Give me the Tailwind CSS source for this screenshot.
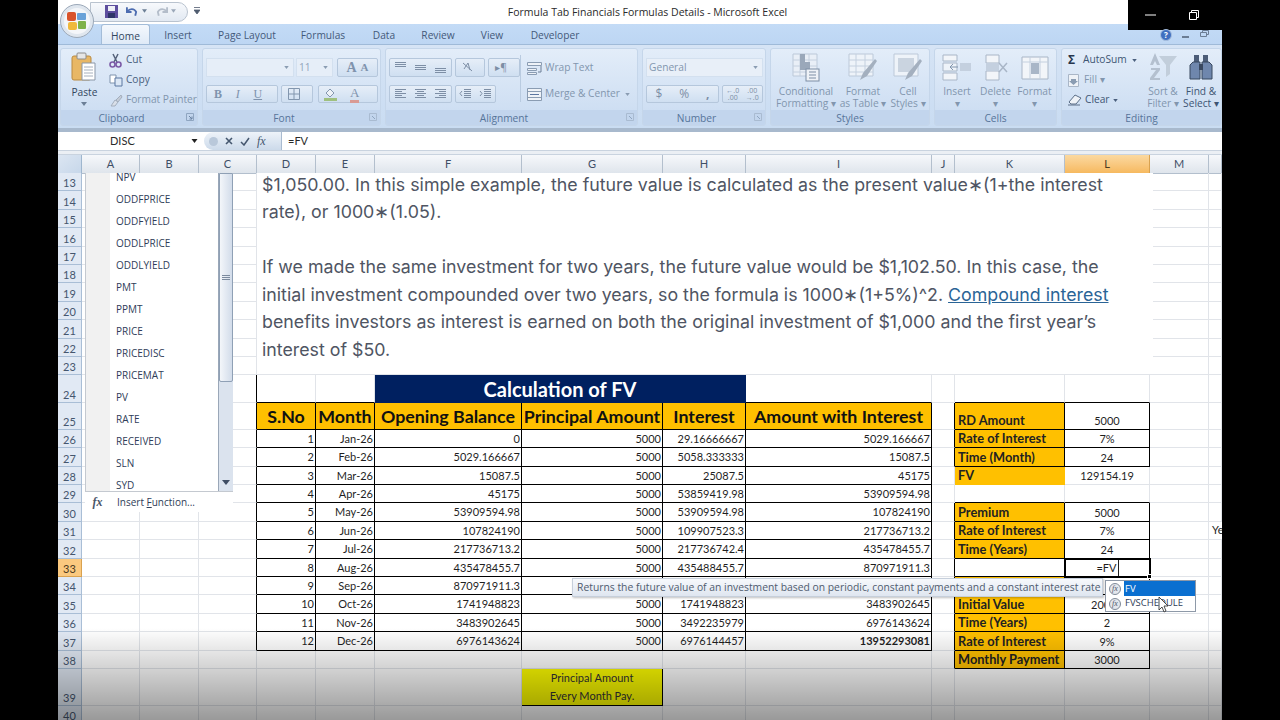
<!DOCTYPE html>
<html lang="en">
<head>
<meta charset="utf-8"/>
<title>Formula Tab Financials Formulas Details - Microsoft Excel</title>
<script src="https://cdn.jsdelivr.net/npm/@tailwindcss/browser@4"></script>
</head>
<body class="bg-black font-['Open_Sans',sans-serif] overflow-hidden">
<div id="app" class="relative w-[1164px] h-[720px] ml-[58px] bg-white overflow-hidden flex flex-col text-[10.2px] text-[#3e5573]">

  <!-- title bar -->
  <div class="h-[24px] shrink-0 flex items-center justify-center pl-[15px] pt-[2px] text-[#2a2a2a] text-[10.5px] bg-white">Formula Tab Financials Formulas Details - Microsoft Excel</div>

  <!-- tabs -->
  <div class="h-[21px] shrink-0 flex items-end bg-gradient-to-b from-[#c3dbf6] to-[#bdd6f3] border-b border-[#9fbad8] pl-[43px] text-[#44597a]">
    <div class="w-[49px] h-[20px] pt-[4px] flex items-center justify-center bg-gradient-to-b from-[#f4f8fd] to-[#dfeaf7] border border-b-0 border-[#a3bcd8] rounded-t-[3px] text-[#33475f]">Home</div>
    <div class="w-[56px] h-[20px] pt-[4px] flex items-center justify-center">Insert</div>
    <div class="w-[82px] h-[20px] pt-[4px] flex items-center justify-center">Page Layout</div>
    <div class="w-[70px] h-[20px] pt-[4px] flex items-center justify-center">Formulas</div>
    <div class="w-[52px] h-[20px] pt-[4px] flex items-center justify-center">Data</div>
    <div class="w-[56px] h-[20px] pt-[4px] flex items-center justify-center">Review</div>
    <div class="w-[52px] h-[20px] pt-[4px] flex items-center justify-center">View</div>
    <div class="w-[74px] h-[20px] pt-[4px] flex items-center justify-center">Developer</div>
  </div>

  <!-- ribbon -->
  <div class="h-[87px] shrink-0 flex gap-[4px] pl-[2px] pt-[3px] bg-gradient-to-b from-[#d6e4f5] to-[#c9dcf2] border-b-[4px] border-[#a8b9cd]">

    <!-- clipboard -->
    <div class="w-[138px] h-[78px] flex flex-col rounded-[3px] border border-[#c5d6ea] bg-gradient-to-b from-[#e3edf9] to-[#c9dbf1] overflow-hidden">
      <div class="h-[61px] flex">
        <div class="w-[46px] flex flex-col items-center pt-[3px] pl-[2px]">
          <svg class="w-[26px] h-[30px]" viewBox="0 0 26 30"><rect x="1" y="4" width="19" height="24" rx="2" fill="#e8b765" stroke="#b98a42"/><rect x="6" y="1" width="9" height="6" rx="1" fill="#e6e6e6" stroke="#8c8c8c"/><path d="M11 11h13v17H11z" fill="#fff" stroke="#8a97a8"/><path d="M13 15h9M13 18h9M13 21h9M13 24h9" stroke="#a6b0bd"/></svg>
          <span class="leading-[13px] mt-[4px] text-[#33475f]">Paste</span>
          <svg class="w-[6px] h-[4px] mt-[3px]" viewBox="0 0 6 4"><path d="M0 0h6L3 4z" fill="#6c7f96"/></svg>
        </div>
        <div class="flex flex-col pt-[1px] pl-[3px] whitespace-nowrap">
          <div class="h-[20px] flex items-center gap-[4px]">
            <svg class="w-[13px] h-[15px]" viewBox="0 0 13 15"><path d="M4 1l4 8M9 1L5 9" stroke="#56627a" stroke-width="1.5"/><circle cx="3.5" cy="11.5" r="2.5" fill="none" stroke="#7b5aa6" stroke-width="1.6"/><circle cx="9.5" cy="11.5" r="2.5" fill="none" stroke="#7b5aa6" stroke-width="1.6"/></svg>
            <span class="text-[#4a5f7d]">Cut</span>
          </div>
          <div class="h-[20px] flex items-center gap-[3px]">
            <svg class="w-[14px] h-[13px]" viewBox="0 0 14 13"><path d="M1 1h6v8H1z" fill="#fff" stroke="#7f93ad"/><path d="M6 4h7v8H6z" fill="#dbe7f5" stroke="#5b76a0"/></svg>
            <span class="text-[#4a5f7d]">Copy</span>
          </div>
          <div class="h-[20px] flex items-center gap-[3px]">
            <svg class="w-[14px] h-[14px]" viewBox="0 0 14 14"><path d="M2 13l4-6 3 2-3 4z" fill="#d9dfe8" stroke="#a3aebd"/><path d="M7 7l5-5 1 2-4 5z" fill="#c4ccd7" stroke="#a3aebd"/></svg>
            <span class="text-[#8296ae]">Format Painter</span>
          </div>
        </div>
      </div>
      <div class="h-[15px] flex items-center justify-center relative bg-[#c2d5ed] text-[#56749a] pt-[2px] pr-[15px]">Clipboard
        <svg class="absolute right-[3px] top-[3px] w-[8px] h-[8px]" viewBox="0 0 8 8"><path d="M.5.5h7v7h-7z" fill="none" stroke="#8fa5c0"/><path d="M3 3l3 3M6 3.500V6H3.500" stroke="#6b83a3" fill="none"/></svg>
      </div>
    </div>

    <!-- font -->
    <div class="w-[179px] h-[78px] flex flex-col rounded-[3px] border border-[#c5d6ea] bg-gradient-to-b from-[#e3edf9] to-[#c9dbf1] overflow-hidden">
      <div class="h-[61px] flex flex-col gap-[8px] pt-[9px] pl-[3px]">
        <div class="h-[19px] flex gap-[2px]">
          <div class="w-[88px] flex items-center justify-end pr-[4px] bg-[#e6eef8] border border-[#d3e0ef]"><svg class="w-[5px] h-[3px]" viewBox="0 0 6 4"><path d="M0 0h6L3 4z" fill="#8a9cb2"/></svg></div>
          <div class="w-[37px] flex items-center justify-between px-[2px] pr-[4px] bg-[#e6eef8] border border-[#d3e0ef] text-[#93a5bb]">11<svg class="w-[5px] h-[3px]" viewBox="0 0 6 4"><path d="M0 0h6L3 4z" fill="#8a9cb2"/></svg></div>
          <div class="w-[41px] ml-[2px] flex items-center justify-center gap-[4px] bg-gradient-to-b from-[#e6eef8] to-[#cfdff1] border border-[#b5c7dc] rounded-[2px] font-['Liberation_Serif',serif] text-[#7f93ad]"><span class="text-[14px] font-bold">A</span><span class="text-[11px] font-bold">A</span></div>
        </div>
        <div class="h-[18px] flex gap-[3px]">
          <div class="w-[72px] flex items-center justify-around pr-[8px] bg-gradient-to-b from-[#e6eef8] to-[#cfdff1] border border-[#b5c7dc] rounded-[2px] font-['Liberation_Serif',serif] text-[12px] text-[#7f93ad]"><b>B</b><i>I</i><u>U</u></div>
          <div class="w-[32px] flex items-center justify-center bg-gradient-to-b from-[#e6eef8] to-[#cfdff1] border border-[#b5c7dc] rounded-[2px] pr-[6px]"><svg class="w-[12px] h-[12px]" viewBox="0 0 12 12"><path d="M.5.5h11v11H.5zM6 .500v11M.5 6h11" fill="none" stroke="#8296ae"/></svg></div>
          <div class="w-[60px] ml-[2px] flex items-center gap-[12px] pl-[4px] bg-gradient-to-b from-[#e6eef8] to-[#cfdff1] border border-[#b5c7dc] rounded-[2px]">
            <svg class="w-[15px] h-[14px]" viewBox="0 0 15 14"><path d="M3 6l4-4 4 4-4 4z" fill="#eef2f7" stroke="#8296ae"/><rect x="1" y="11" width="13" height="3" fill="#9fc07f"/></svg>
            <span class="text-[13px] leading-[14px] font-['Liberation_Serif',serif] text-[#7f93ad] border-b-[3px] border-[#d99a94]">A</span>
          </div>
        </div>
      </div>
      <div class="h-[15px] flex items-center justify-center relative bg-[#c2d5ed] text-[#56749a] pt-[2px] pr-[15px]">Font
        <svg class="absolute right-[3px] top-[3px] w-[8px] h-[8px]" viewBox="0 0 8 8"><path d="M.5.5h7v7h-7z" fill="none" stroke="#a9bbd1"/><path d="M3 3l3 3" stroke="#8fa5c0"/></svg>
      </div>
    </div>

    <!-- alignment -->
    <div class="w-[253px] h-[78px] flex flex-col rounded-[3px] border border-[#c5d6ea] bg-gradient-to-b from-[#e3edf9] to-[#c9dbf1] overflow-hidden">
      <div class="h-[61px] flex pt-[9px] pl-[3px]">
        <div class="w-[131px] flex flex-col gap-[8px]">
          <div class="h-[19px] flex gap-[3px]">
            <div class="w-[63px] flex items-center justify-around bg-gradient-to-b from-[#e6eef8] to-[#cfdff1] border border-[#b5c7dc] rounded-[2px]">
              <svg class="w-[13px] h-[13px]" viewBox="0 0 13 13"><path d="M1 1.500h11M1 3.500h11M1 5.500h11" stroke="#7d8ea5"/></svg>
              <svg class="w-[13px] h-[13px]" viewBox="0 0 13 13"><path d="M1 4.500h11M1 6.500h11M1 8.500h11" stroke="#7d8ea5"/></svg>
              <svg class="w-[13px] h-[13px]" viewBox="0 0 13 13"><path d="M1 7.500h11M1 9.500h11M1 11.500h11" stroke="#7d8ea5"/></svg>
            </div>
            <div class="w-[30px] flex items-center justify-center bg-gradient-to-b from-[#e6eef8] to-[#cfdff1] border border-[#b5c7dc] rounded-[2px] pr-[4px]"><svg class="w-[14px] h-[13px]" viewBox="0 0 14 13"><path d="M2 2l9 8M3 8l4-6 2 7" stroke="#7d8ea5" fill="none"/></svg></div>
            <div class="w-[32px] flex items-center justify-center bg-gradient-to-b from-[#e6eef8] to-[#cfdff1] border border-[#b5c7dc] rounded-[2px] text-[#7d8ea5] pr-[6px]">▸¶</div>
          </div>
          <div class="h-[18px] flex gap-[3px]">
            <div class="w-[63px] flex items-center justify-around bg-gradient-to-b from-[#e6eef8] to-[#cfdff1] border border-[#b5c7dc] rounded-[2px]">
              <svg class="w-[13px] h-[12px]" viewBox="0 0 13 12"><path d="M1 1.500h11M1 3.500h7M1 5.500h11M1 7.500h7M1 9.500h11" stroke="#7d8ea5"/></svg>
              <svg class="w-[13px] h-[12px]" viewBox="0 0 13 12"><path d="M1 1.500h11M3 3.500h7M1 5.500h11M3 7.500h7M1 9.500h11" stroke="#7d8ea5"/></svg>
              <svg class="w-[13px] h-[12px]" viewBox="0 0 13 12"><path d="M1 1.500h11M5 3.500h7M1 5.500h11M5 7.500h7M1 9.500h11" stroke="#7d8ea5"/></svg>
            </div>
            <div class="w-[41px] flex items-center justify-around bg-gradient-to-b from-[#e6eef8] to-[#cfdff1] border border-[#b5c7dc] rounded-[2px]">
              <svg class="w-[13px] h-[12px]" viewBox="0 0 13 12"><path d="M5 1.500h7M5 3.500h7M5 5.500h7M5 7.500h7M5 9.500h7M3 3L1 5.500 3 8" stroke="#7d8ea5" fill="none"/></svg>
              <svg class="w-[13px] h-[12px]" viewBox="0 0 13 12"><path d="M5 1.500h7M5 3.500h7M5 5.500h7M5 7.500h7M5 9.500h7M1 3l2 2.500L1 8" stroke="#7d8ea5" fill="none"/></svg>
            </div>
          </div>
        </div>
        <div class="w-px h-[47px] bg-[#b9cbe0] -mt-[3px]"></div>
        <div class="flex flex-col gap-[8px] pl-[6px] text-[#8296ae] whitespace-nowrap">
          <div class="h-[19px] flex items-center gap-[3px]">
            <svg class="w-[15px] h-[14px]" viewBox="0 0 15 14"><path d="M.5 1.500h14v3H.5zM.5 7.500h9v2h-9zM.5 11.500h9v2h-9z" fill="#eef2f7" stroke="#8a9cb2"/><path d="M14 5v6h-3" stroke="#6c7f96" fill="none"/></svg>Wrap Text
          </div>
          <div class="h-[18px] flex items-center gap-[3px]">
            <svg class="w-[15px] h-[13px]" viewBox="0 0 15 13"><path d="M.5.500h14v12H.5z" fill="#eef2f7" stroke="#8a9cb2"/><path d="M.5 3.500h14M.5 9.500h14" stroke="#8a9cb2"/><path d="M3 6.500h9" stroke="#5b76a0"/></svg>Merge &amp; Center<svg class="w-[5px] h-[3px] ml-[2px]" viewBox="0 0 6 4"><path d="M0 0h6L3 4z" fill="#8a9cb2"/></svg>
          </div>
        </div>
      </div>
      <div class="h-[15px] flex items-center justify-center relative bg-[#c2d5ed] text-[#56749a] pt-[2px] pr-[15px]">Alignment
        <svg class="absolute right-[3px] top-[3px] w-[8px] h-[8px]" viewBox="0 0 8 8"><path d="M.5.5h7v7h-7z" fill="none" stroke="#a9bbd1"/><path d="M3 3l3 3" stroke="#8fa5c0"/></svg>
      </div>
    </div>

    <!-- number -->
    <div class="w-[124px] h-[78px] flex flex-col rounded-[3px] border border-[#c5d6ea] bg-gradient-to-b from-[#e3edf9] to-[#c9dbf1] overflow-hidden">
      <div class="h-[61px] flex flex-col gap-[8px] pt-[9px] pl-[3px]">
        <div class="w-[117px] h-[19px] flex items-center justify-between px-[2px] pr-[4px] bg-[#e8eff8] border border-[#d3e0ef] text-[#8296ae]">General<svg class="w-[5px] h-[3px]" viewBox="0 0 6 4"><path d="M0 0h6L3 4z" fill="#8a9cb2"/></svg></div>
        <div class="h-[18px] flex gap-[3px]">
          <div class="w-[73px] flex items-center justify-around bg-gradient-to-b from-[#e6eef8] to-[#cfdff1] border border-[#b5c7dc] rounded-[2px] text-[12px] text-[#7d8ea5]"><span>$</span><span>%</span><b>,</b></div>
          <div class="w-[41px] flex items-center justify-around bg-gradient-to-b from-[#e6eef8] to-[#cfdff1] border border-[#b5c7dc] rounded-[2px] text-[7px] leading-[7px] text-[#7d8ea5] text-center"><span>←.0<br/>.00</span><span>.00<br/>→.0</span></div>
        </div>
      </div>
      <div class="h-[15px] flex items-center justify-center relative bg-[#c2d5ed] text-[#56749a] pt-[2px] pr-[15px]">Number
        <svg class="absolute right-[3px] top-[3px] w-[8px] h-[8px]" viewBox="0 0 8 8"><path d="M.5.5h7v7h-7z" fill="none" stroke="#a9bbd1"/><path d="M3 3l3 3" stroke="#8fa5c0"/></svg>
      </div>
    </div>

    <!-- styles -->
    <div class="w-[160px] h-[78px] flex flex-col rounded-[3px] border border-[#c5d6ea] bg-gradient-to-b from-[#e3edf9] to-[#c9dbf1] overflow-hidden">
      <div class="h-[61px] flex pt-[4px] pl-[4px] text-[#8296ae] leading-[12px] text-center">
        <div class="w-[62px] flex flex-col items-center">
          <svg class="w-[28px] h-[29px]" viewBox="0 0 28 29"><path d="M1 1h24v22H1z" fill="#e9eff7" stroke="#bcc9d9"/><path d="M1 7h24M1 13h24M1 19h24M8 1v22M17 1v22" stroke="#c4d0df"/><path d="M8 1h5v8h5v8H8z" fill="#9aa8ba"/><rect x="14" y="16" width="13" height="12" fill="#eef2f7" stroke="#7d8ea5"/><path d="M17 19h7M17 22h7M17 25h7" stroke="#7d8ea5"/></svg>
          <span class="mt-[3px] whitespace-nowrap">Conditional<br/>Formatting ▾</span>
        </div>
        <div class="w-[52px] flex flex-col items-center">
          <svg class="w-[30px] h-[29px]" viewBox="0 0 30 29"><path d="M1 1h24v22H1z" fill="#eef3f9" stroke="#bcc9d9"/><path d="M1 7h24M1 13h24M1 19h24M8 1v22M17 1v22" stroke="#c4d0df"/><path d="M12 27l3-7 12-14 2 2-10 15z" fill="#a4b0bf"/></svg>
          <span class="mt-[3px] whitespace-nowrap">Format<br/>as Table ▾</span>
        </div>
        <div class="w-[38px] flex flex-col items-center">
          <svg class="w-[30px] h-[29px]" viewBox="0 0 30 29"><path d="M1 1h24v22H1z" fill="#eef3f9" stroke="#bcc9d9"/><path d="M5 5h16v14H5z" fill="#cad4e0"/><path d="M12 27l3-7 12-14 2 2-10 15z" fill="#a4b0bf"/></svg>
          <span class="mt-[3px] whitespace-nowrap">Cell<br/>Styles ▾</span>
        </div>
      </div>
      <div class="h-[15px] flex items-center justify-center bg-[#c2d5ed] text-[#56749a] pt-[2px]">Styles</div>
    </div>

    <!-- cells -->
    <div class="w-[123px] h-[78px] flex flex-col rounded-[3px] border border-[#c5d6ea] bg-gradient-to-b from-[#e3edf9] to-[#c9dbf1] overflow-hidden">
      <div class="h-[61px] flex pt-[4px] pl-[3px] text-[#8296ae] leading-[12px] text-center">
        <div class="w-[38px] flex flex-col items-center">
          <svg class="w-[30px] h-[29px]" viewBox="0 0 30 29"><path d="M1 2h14v6H1zM1 20h14v7H1z" fill="#f2f5f9" stroke="#a9b6c7"/><path d="M1 10h14v8H1z" fill="#eef3f9" stroke="#a9b6c7"/><path d="M18 10h11v8H18z" fill="#c4d0df"/><path d="M16 14H8M11 11l-3 3 3 3" stroke="#8296ae" fill="none"/></svg>
          <span class="mt-[3px]">Insert<br/>▾</span>
        </div>
        <div class="w-[39px] flex flex-col items-center">
          <svg class="w-[26px] h-[29px]" viewBox="0 0 26 29"><path d="M3 2h13v8H3zM3 18h13v9H3z" fill="#f2f5f9" stroke="#a9b6c7"/><path d="M3 11h13v6H3z" fill="#c4d0df"/><path d="M16 10l8 9M24 10l-8 9" stroke="#a9b6c7" stroke-width="1.500"/></svg>
          <span class="mt-[3px]">Delete<br/>▾</span>
        </div>
        <div class="w-[39px] flex flex-col items-center">
          <svg class="w-[28px] h-[29px]" viewBox="0 0 28 29"><path d="M1 4h26v22H1z" fill="#f2f5f9" stroke="#a9b6c7"/><path d="M9 4v22M19 4v22M1 9h26" stroke="#c4d0df"/><path d="M10 10h8v11h-8z" fill="#a9b6c7"/></svg>
          <span class="mt-[3px]">Format<br/>▾</span>
        </div>
      </div>
      <div class="h-[15px] flex items-center justify-center bg-[#c2d5ed] text-[#56749a] pt-[2px]">Cells</div>
    </div>

    <!-- editing -->
    <div class="w-[161px] h-[78px] flex flex-col rounded-[3px] border border-[#c5d6ea] bg-gradient-to-b from-[#e3edf9] to-[#c9dbf1] overflow-hidden">
      <div class="h-[61px] flex pl-[6px]">
        <div class="w-[76px] flex flex-col pt-[1px]">
          <div class="h-[20px] flex items-center gap-[5px] text-[#3e5573]"><span class="w-[10px] font-bold text-[12px] leading-none text-[#27364d]">Σ</span>AutoSum<svg class="w-[5px] h-[3px]" viewBox="0 0 6 4"><path d="M0 0h6L3 4z" fill="#4a5f7d"/></svg></div>
          <div class="h-[20px] flex items-center gap-[5px] text-[#8296ae]"><svg class="w-[11px] h-[13px]" viewBox="0 0 11 13"><path d="M.5.500h10v12H.5z" fill="#eef2f7" stroke="#a9b6c7"/><path d="M3 5h5v2h2L5.500 11 1 7h2z" fill="#8a9cb2"/></svg>Fill ▾</div>
          <div class="h-[20px] flex items-center gap-[3px] text-[#3e5573]"><svg class="w-[14px] h-[12px]" viewBox="0 0 14 12"><path d="M1 8l6-7 6 3-5 6H3z" fill="#eef2f7" stroke="#5c6f88"/><path d="M0 11h12" stroke="#5c6f88"/></svg>Clear<svg class="w-[5px] h-[3px]" viewBox="0 0 6 4"><path d="M0 0h6L3 4z" fill="#4a5f7d"/></svg></div>
        </div>
        <div class="w-[38px] flex flex-col items-center pt-[3px] text-[#8296ae] leading-[12px] text-center">
          <svg class="w-[30px] h-[30px]" viewBox="0 0 30 30"><path d="M7 1L2 13h3l2-4 2 4h3zM3 16h9v2l-6 8h6v2H2v-2l6-8H3z" fill="#b4c0cf"/><path d="M11 4h18l-7 9v9l-4 3V13z" fill="#c2cedb"/></svg>
          <span class="mt-[3px] whitespace-nowrap">Sort &amp;<br/>Filter ▾</span>
        </div>
        <div class="w-[38px] flex flex-col items-center pt-[3px] text-[#3e5573] leading-[12px] text-center">
          <svg class="w-[28px] h-[30px]" viewBox="0 0 28 30"><path d="M7 3h5v8H7zM16 3h5v8h-5z" fill="#4b5c78"/><path d="M3 13l3-3h7v17H3zM15 10h7l3 3v14H15z" fill="#6f87ad" stroke="#39485f"/><path d="M12 12h4v6h-4z" fill="#39485f"/></svg>
          <span class="mt-[3px] whitespace-nowrap">Find &amp;<br/>Select ▾</span>
        </div>
      </div>
      <div class="h-[15px] flex items-center justify-center bg-[#c2d5ed] text-[#56749a] pt-[2px]">Editing</div>
    </div>
  </div>

  <!-- formula bar -->
  <div class="h-[18px] shrink-0 flex items-center bg-white text-[#2a2a2a] font-['Lato',sans-serif] text-[11px]">
    <div class="w-[142px] flex items-center justify-between pl-[52px] pr-[2px]">DISC<svg class="w-[7px] h-[4px]" viewBox="0 0 6 4"><path d="M0 0h6L3 4z" fill="#222"/></svg></div>
    <div class="w-[78px] h-[18px] ml-[4px] flex items-center gap-[7px] pl-[5px] rounded-l-[9px] bg-gradient-to-b from-[#eef3f9] to-[#ccdaea] border-r border-[#a9bbd0]">
      <span class="w-[9px] h-[9px] rounded-full bg-[#b9c8da]"></span>
      <svg class="w-[8px] h-[8px]" viewBox="0 0 8 8"><path d="M1 1l6 6M7 1L1 7" stroke="#44566e" stroke-width="1.600"/></svg>
      <svg class="w-[10px] h-[9px]" viewBox="0 0 10 9"><path d="M1 5l3 3 5-7" stroke="#44566e" stroke-width="1.500" fill="none"/></svg>
      <i class="font-['Liberation_Serif',serif] text-[12px] leading-none text-[#44566e]">fx</i>
    </div>
    <div class="pl-[6px]">=FV</div>
  </div>
  <div class="h-[5px] shrink-0 bg-[#ebeff4] border-t border-[#b7c3d1] border-b border-[#c9d3df]"></div>

  <!-- sheet rendered by script -->
  <div id="sheet" class="flex flex-col font-['Lato',sans-serif] text-[#1f1f1f] text-[11px]"></div>

  <!-- pasted article text -->
  <div class="absolute left-[199px] top-[173px] w-[896px] h-[201px] bg-white overflow-hidden pl-[5px] font-['Inter',sans-serif] text-[17.8px] leading-[27.5px] text-[#4f5563] whitespace-nowrap">
    <p class="-mt-[2.5px] mb-[27.5px]">$1,050.00. In this simple example, the future value is calculated as the present value∗(1+the interest<br/>rate), or 1000∗(1.05).</p>
    <p>If we made the same investment for two years, the future value would be $1,102.50. In this case, the<br/>initial investment compounded over two years, so the formula is 1000∗(1+5%)^2. <span class="text-[#2a6496] underline">Compound interest</span><br/>benefits investors as interest is earned on both the original investment of $1,000 and the first year’s<br/>interest of $50.</p>
  </div>

  <!-- function dropdown -->
  <div class="absolute left-[27px] top-[173px] w-[148px] h-[339px] flex flex-col bg-white text-[#2f3d58] font-['Open_Sans',sans-serif] text-[10px]">
    <div class="h-[318px] flex overflow-hidden">
      <div class="w-[25px] bg-[#f1f1f1] border-l border-[#c4c9d0]"></div>
      <div id="fnlist" class="w-[109px] -mt-[7px] pl-[6px] border-r border-[#9aa7b8]"></div>
      <div class="w-[14px] flex flex-col bg-[#dbe3ee]">
        <div class="h-[209px] flex items-center justify-center bg-gradient-to-r from-[#f3f6fa] to-[#d2dcea] border border-[#8fa0b5] rounded-b-[2px] shrink-0">
          <svg class="w-[8px] h-[6px]" viewBox="0 0 8 6"><path d="M0 .5h8M0 2.500h8M0 4.500h8" stroke="#7b8a9e"/></svg>
        </div>
        <svg class="w-[8px] h-[5px] mt-[98px] ml-[3px]" viewBox="0 0 8 5"><path d="M0 0h8L4 5z" fill="#3f4d63"/></svg>
      </div>
    </div>
    <div class="h-[21px] flex items-center border-t border-[#c4c9d0] bg-white">
      <i class="w-[25px] text-center font-['Liberation_Serif',serif] text-[12px] font-bold text-[#4a5568]">fx</i>
      <span class="pl-[7px]">Insert <u>F</u>unction...</span>
    </div>
  </div>

  <!-- tooltip -->
  <div class="absolute left-[514px] top-[578px] w-[531px] h-[19px] flex items-center pl-[4px] whitespace-nowrap bg-gradient-to-b from-[#f7f9fc] to-[#dfe6f0] border border-[#c6cfdb] shadow-[1px_1px_2px_rgba(0,0,0,0.25)] text-[#4f5b6e] text-[10.35px]">Returns the future value of an investment based on periodic, constant payments and a constant interest rate</div>

  <!-- autocomplete -->
  <div class="absolute left-[1047px] top-[580px] w-[91px] h-[32px] flex flex-col bg-white border border-[#8e99a8] text-[#2f3d58] text-[9.5px]">
    <div class="h-[15px] flex items-center">
      <span class="w-[18px] flex justify-center"><span class="w-[12px] h-[12px] rounded-full border border-[#7f8a99] bg-[#e4e7ec] flex items-center justify-center font-['Liberation_Serif',serif] italic text-[8px] leading-none text-[#4a5568]">fx</span></span>
      <span class="flex-1 h-[15px] bg-[#0a6fd0] text-white leading-[15px] pl-[1px]">FV</span>
    </div>
    <div class="h-[15px] flex items-center">
      <span class="w-[18px] flex justify-center"><span class="w-[12px] h-[12px] rounded-full border border-[#7f8a99] bg-[#e4e7ec] flex items-center justify-center font-['Liberation_Serif',serif] italic text-[8px] leading-none text-[#4a5568]">fx</span></span>
      <span class="pl-[1px]">FVSCHEDULE</span>
    </div>
  </div>
  <svg class="absolute left-[1100px] top-[596px] w-[12px] h-[17px]" viewBox="0 0 12 17"><path d="M1 1v13l3-3 2 5 2-1-2-5h4z" fill="#fff" stroke="#222" stroke-width=".8"/></svg>

  <!-- video fade at the bottom -->
  <div class="absolute left-0 right-0 top-[628px] h-[92px] bg-gradient-to-b from-transparent to-black/40 pointer-events-none"></div>

  <!-- office button and quick access -->
  <div class="absolute left-[32px] top-[2px] w-[98px] h-[20px] rounded-r-[10px] border border-[#b9c3cf] bg-gradient-to-b from-[#f7f9fc] to-[#e2e9f2]"></div>
  <svg class="absolute left-[2px] top-[4px] w-[34px] h-[34px]" viewBox="0 0 34 34"><circle cx="17" cy="17" r="16.500" fill="#dfe6ee" stroke="#9ba8b8"/><circle cx="17" cy="17" r="13" fill="#f4f6f9"/><rect x="7" y="8" width="9" height="9" rx="2" fill="#d9542c"/><rect x="17" y="9" width="9" height="7" rx="1" fill="#6aa2d8"/><rect x="8" y="18" width="9" height="8" rx="2" fill="#f0b93c"/><rect x="18" y="17" width="8" height="8" rx="1" fill="#7fb24a"/></svg>
  <svg class="absolute left-[47px] top-[5px] w-[13px] h-[13px]" viewBox="0 0 13 13"><path d="M0 0h13v13H0z" fill="#5d4e9e"/><path d="M3 1h7v5H3z" fill="#eef0f6"/><path d="M3 8h7v5H3z" fill="#2f3568"/></svg>
  <svg class="absolute left-[68px] top-[6px] w-[12px] h-[11px]" viewBox="0 0 13 11"><path d="M1 1v5h5M1.500 5.500C4 2 9 2 11 6l-1 4" fill="none" stroke="#4d6cb0" stroke-width="2"/></svg>
  <svg class="absolute left-[84px] top-[9px] w-[5px] h-[4px]" viewBox="0 0 6 4"><path d="M0 0h6L3 4z" fill="#6c7f96"/></svg>
  <svg class="absolute left-[98px] top-[6px] w-[12px] h-[11px]" viewBox="0 0 13 11"><path d="M12 1v5H7M11.500 5.500C9 2 4 2 2 6l1 4" fill="none" stroke="#b4bdca" stroke-width="2"/></svg>
  <svg class="absolute left-[113px] top-[9px] w-[5px] h-[4px]" viewBox="0 0 6 4"><path d="M0 0h6L3 4z" fill="#9aa7b8"/></svg>
  <svg class="absolute left-[136px] top-[7px] w-[6px] h-[8px]" viewBox="0 0 6 8"><path d="M0 .5h6M0 3h6L3 7z" stroke="#4f5b6e" fill="#4f5b6e" stroke-width=".8"/></svg>

  <!-- window controls -->
  <div class="absolute left-[1070px] top-0 w-[94px] h-[30px] bg-black flex items-center pl-[17px] gap-[33px]">
    <svg class="w-[11px] h-[2px]" viewBox="0 0 11 2"><path d="M0 1h11" stroke="#fff"/></svg>
    <svg class="w-[10px] h-[10px]" viewBox="0 0 10 10"><path d="M2.500 2.500V.5h7v7h-2M.5 2.500h7v7h-7z" fill="none" stroke="#fff"/></svg>
  </div>
  <div class="absolute left-[1102px] top-[29px] w-[12px] h-[12px] rounded-full bg-[#3f6fc0] border border-[#a6bede] text-white text-[8px] font-bold leading-[10px] text-center">?</div>
  <div class="absolute left-[1124px] top-[36px] w-[7px] h-[2px] bg-[#6b7d94]"></div>
  <svg class="absolute left-[1142px] top-[30px] w-[9px] h-[7px]" viewBox="0 0 9 7"><path d="M.5 2.500h6v4h-6zM2.500 2V.5h6v4H7" fill="none" stroke="#6b7d94"/></svg>
</div>

<script>
// row heights follow the sheet, everything else has the default height
const colNames = ['A','B','C','D','E','F','G','H','I','J','K','L','M','N'];
const colTemplate = 'grid grid-cols-[24px_58px_59px_58px_59px_59px_147px_141px_83px_186px_23px_110px_85px_59px_13px]';

const tableRows = {
  26: ['1','Jan-26','0','5000','29.16666667','5029.166667'],
  27: ['2','Feb-26','5029.166667','5000','5058.333333','15087.5'],
  28: ['3','Mar-26','15087.5','5000','25087.5','45175'],
  29: ['4','Apr-26','45175','5000','53859419.98','53909594.98'],
  30: ['5','May-26','53909594.98','5000','53909594.98','107824190'],
  31: ['6','Jun-26','107824190','5000','109907523.3','217736713.2'],
  32: ['7','Jul-26','217736713.2','5000','217736742.4','435478455.7'],
  33: ['8','Aug-26','435478455.7','5000','435488455.7','870971911.3'],
  34: ['9','Sep-26','870971911.3','5000','',''],
  35: ['10','Oct-26','1741948823','5000','1741948823','3483902645'],
  36: ['11','Nov-26','3483902645','5000','3492235979','6976143624'],
  37: ['12','Dec-26','6976143624','5000','6976144457','13952293081']
};
const tableHead = ['S.No','Month','Opening Balance','Principal Amount','Interest','Amount with Interest'];

// K and L columns; boxed rows get black borders
const sideRows = {
  25: ['RD Amount','5000',true], 26: ['Rate of Interest','7%',true], 27: ['Time (Month)','24',true],
  28: ['FV','129154.19',false],
  30: ['Premium','5000',true], 31: ['Rate of Interest','7%',true], 32: ['Time (Years)','24',true],
  34: ['','',true],
  35: ['Initial Value','20000',true], 36: ['Time (Years)','2',true], 37: ['Rate of Interest','9%',true], 38: ['Monthly Payment','3000',true]
};

const grid = 'border-[#e1e4e9]';
const line = 'border-black';
const rightLine = 'border-r-black border-b-[#e1e4e9]';
const bottomLine = 'border-b-black border-r-[#e1e4e9]';
const base = 'border-r border-b overflow-hidden whitespace-nowrap flex ';

function rowHeight(n) {
  if (n === 24) return 'h-[27.6px]';
  if (n === 25) return 'h-[27px]';
  if (n === 39) return 'h-[36.6px]';
  return 'h-[18.4px]';
}

function cellsFor(n) {
  const cells = {};
  // left table
  if (n >= 25 && n <= 37) cells.C = { c: rightLine };
  if (n === 24) {
    cells.C = { c: rightLine };
    cells.D = { c: bottomLine }; cells.E = { c: bottomLine };
    cells.F = { t: 'Calculation of FV', span: 'col-span-3', c: 'border-[#002060] bg-[#002060] text-white font-bold text-[20px] leading-none items-center justify-center' };
    cells.I = { c: bottomLine };
  }
  if (n === 25) {
    'DEFGHI'.split('').forEach((k, i) => {
      cells[k] = { t: tableHead[i], c: line + ' bg-[#ffc000] text-[#111] font-bold text-[17.8px] leading-none pt-[2px] items-center justify-center' };
    });
  }
  if (tableRows[n]) {
    'DEFGHI'.split('').forEach((k, i) => {
      const bold = n === 37 && k === 'I' ? ' font-bold' : '';
      cells[k] = { t: tableRows[n][i], c: line + ' items-center justify-end pr-[1px] pt-[1px]' + bold };
    });
  }
  if (n === 39) cells.G = { t: 'Principal Amount<br>Every Month Pay.', c: 'border-black bg-[#ffff00] items-center justify-center text-center leading-[18px] text-[#333]' };

  // right boxes
  const s = sideRows[n];
  if (s) {
    if (s[2]) cells.J = { c: rightLine };
    cells.K = { t: s[0], c: (s[2] ? line : 'border-[#ffc000]') + ' bg-[#ffc000] text-[#222] font-bold text-[12.8px] leading-[18px] items-end pl-[3px]' };
    cells.L = { t: s[1], c: (s[2] ? line : grid) + ' leading-[17px] items-end justify-center' };
  }
  if (n === 24 || n === 29) { cells.K = { c: bottomLine }; cells.L = { c: bottomLine }; }
  if (n === 33) {
    cells.J = { c: rightLine };
    cells.K = { c: line };
    cells.L = { raw: true };
  }
  if (n === 31) cells.N = { t: 'Year', c: grid + ' items-center pl-[3px] border-r-0' };
  return cells;
}

function renderSheet() {
  let html = '<div class="' + colTemplate + ' h-[18px]">';
  html += '<div class="bg-gradient-to-br from-[#dce6f2] to-[#c7d7ea] border-r border-b border-[#9eb6ce]"></div>';
  colNames.forEach((name) => {
    const active = name === 'L'
      ? 'bg-gradient-to-b from-[#fbd9a0] to-[#f6b95f] border-[#d9a24f] text-[#4a3a20]'
      : 'bg-gradient-to-b from-[#f6f8fb] to-[#dfe5ec] border-[#b3bfcd] text-[#3f4f66]';
    html += '<div class="border-r border-b flex items-center justify-center pt-[1px] text-[11px] ' + active + '">' + (name === 'N' ? '' : name) + '</div>';
  });
  html += '</div>';

  for (let n = 13; n <= 40; n++) {
    const cells = cellsFor(n);
    html += '<div class="' + colTemplate + ' ' + rowHeight(n) + '">';
    const head = n === 33
      ? 'bg-[#fbc97f] border-[#d9a24f] text-[#4a3a20]'
      : 'bg-[#e1e9f4] border-[#a9bed6] text-[#45566e]';
    html += '<div class="border-r border-b flex items-end justify-center text-[11px] leading-[15px] ' + head + '">' + n + '</div>';
    let skip = 0;
    colNames.forEach((name) => {
      if (skip > 0) { skip--; return; }
      const cell = cells[name] || { c: grid };
      if (cell.raw) {
        html += '<div class="relative z-10 border-2 border-black flex items-center justify-center -m-px"><span class="border-r border-[#222] pr-[1px]">=FV</span><span class="absolute -right-[3px] -bottom-[3px] w-[5px] h-[5px] bg-black border border-white"></span></div>';
        return;
      }
      if (cell.span) skip = 2;
      html += '<div class="' + base + (cell.span || '') + ' ' + cell.c + '">' + (cell.t || '') + '</div>';
    });
    html += '</div>';
  }
  document.getElementById('sheet').innerHTML = html;
}

function renderFunctions() {
  const names = ['NPV','ODDFPRICE','ODDFYIELD','ODDLPRICE','ODDLYIELD','PMT','PPMT','PRICE','PRICEDISC','PRICEMAT','PV','RATE','RECEIVED','SLN','SYD'];
  document.getElementById('fnlist').innerHTML = names
    .map((name) => '<div class="h-[22px] leading-[22px]">' + name + '</div>')
    .join('');
}

renderSheet();
renderFunctions();
</script>
</body>
</html>
